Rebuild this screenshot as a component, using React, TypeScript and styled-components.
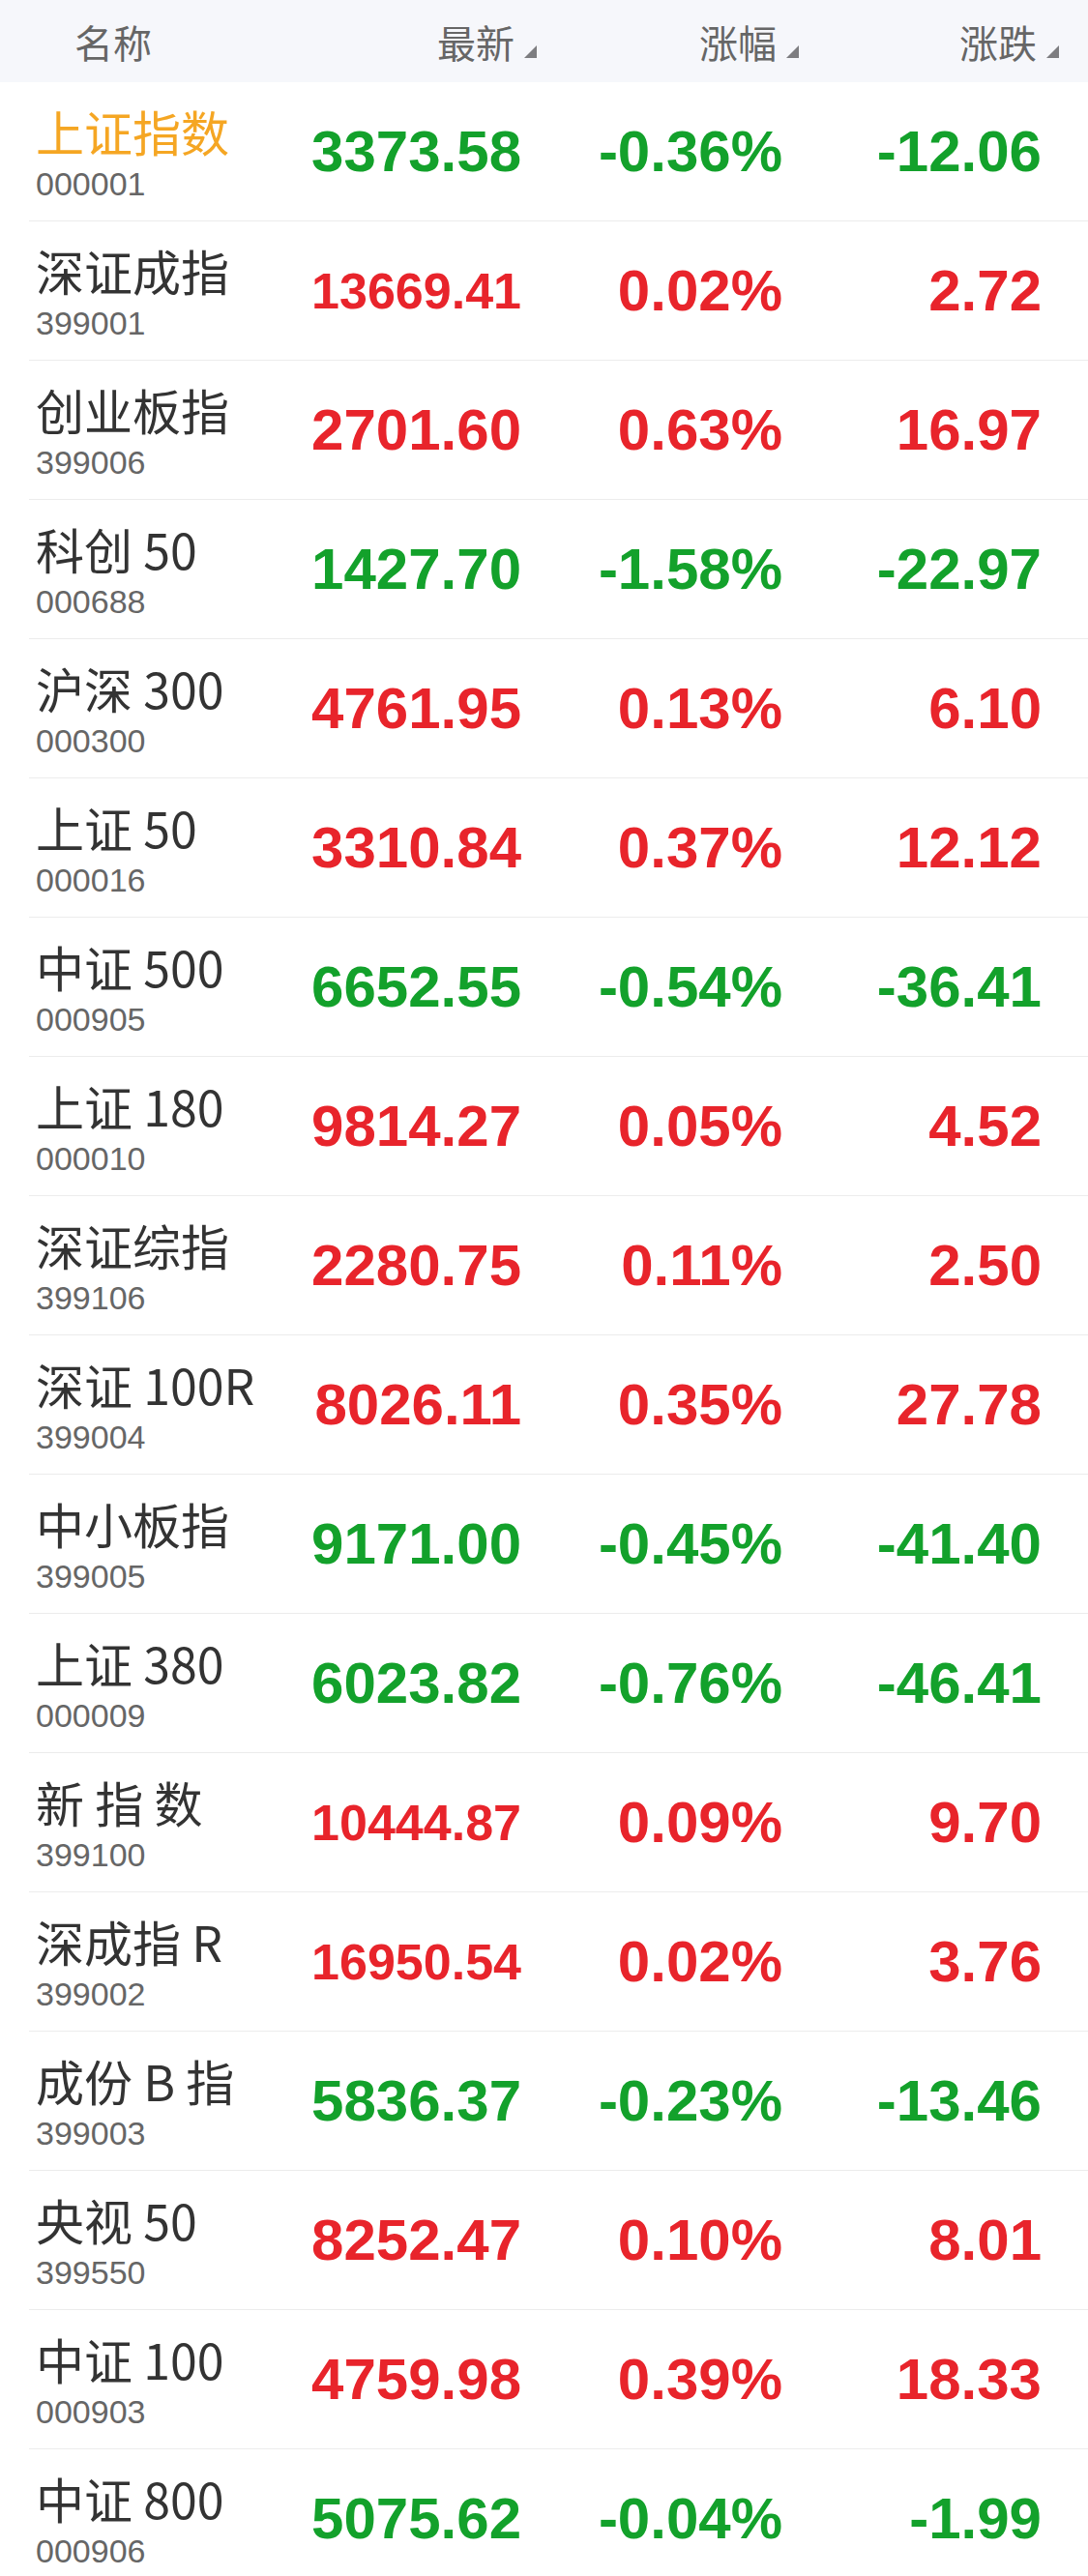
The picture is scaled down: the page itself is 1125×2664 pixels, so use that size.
import React from "react";
import styled, { createGlobalStyle } from "styled-components";

const GlobalStyle = createGlobalStyle`
  html, body {
    margin: 0;
    padding: 0;
    background: #ffffff;
  }
  body {
    font-family: "Noto Sans CJK SC", "Noto Sans", sans-serif;
    -webkit-font-smoothing: antialiased;
  }
`;

type Quote = {
  name: string;
  code: string;
  last: string;
  pct: string;
  chg: string;
  highlight?: boolean;
};

const quotes: Quote[] = [
  { name: "上证指数", code: "000001", last: "3373.58", pct: "-0.36%", chg: "-12.06", highlight: true },
  { name: "深证成指", code: "399001", last: "13669.41", pct: "0.02%", chg: "2.72" },
  { name: "创业板指", code: "399006", last: "2701.60", pct: "0.63%", chg: "16.97" },
  { name: "科创 50", code: "000688", last: "1427.70", pct: "-1.58%", chg: "-22.97" },
  { name: "沪深 300", code: "000300", last: "4761.95", pct: "0.13%", chg: "6.10" },
  { name: "上证 50", code: "000016", last: "3310.84", pct: "0.37%", chg: "12.12" },
  { name: "中证 500", code: "000905", last: "6652.55", pct: "-0.54%", chg: "-36.41" },
  { name: "上证 180", code: "000010", last: "9814.27", pct: "0.05%", chg: "4.52" },
  { name: "深证综指", code: "399106", last: "2280.75", pct: "0.11%", chg: "2.50" },
  { name: "深证 100R", code: "399004", last: "8026.11", pct: "0.35%", chg: "27.78" },
  { name: "中小板指", code: "399005", last: "9171.00", pct: "-0.45%", chg: "-41.40" },
  { name: "上证 380", code: "000009", last: "6023.82", pct: "-0.76%", chg: "-46.41" },
  { name: "新 指 数", code: "399100", last: "10444.87", pct: "0.09%", chg: "9.70" },
  { name: "深成指 R", code: "399002", last: "16950.54", pct: "0.02%", chg: "3.76" },
  { name: "成份 B 指", code: "399003", last: "5836.37", pct: "-0.23%", chg: "-13.46" },
  { name: "央视 50", code: "399550", last: "8252.47", pct: "0.10%", chg: "8.01" },
  { name: "中证 100", code: "000903", last: "4759.98", pct: "0.39%", chg: "18.33" },
  { name: "中证 800", code: "000906", last: "5075.62", pct: "-0.04%", chg: "-1.99" },
];

const Page = styled.div`
  width: 1125px;
  min-height: 2664px;
  background: #ffffff;
  overflow: hidden;
`;

const Header = styled.div`
  height: 85px;
  background: #f6f7fb;
  display: grid;
  grid-template-columns: 210px 268px 271px 269px;
  align-items: center;
  padding: 0 30px 0 77px;
`;

const HeadCell = styled.div<{ $align?: "left" | "right" }>`
  display: flex;
  justify-content: ${(p) => (p.$align === "left" ? "flex-start" : "flex-end")};
  align-items: flex-end;
  gap: 10px;
`;

const HeadLabel = styled.span`
  font-family: "Noto Sans CJK SC", sans-serif;
  font-size: 40px;
  line-height: 58px;
  color: #666666;
`;

const SortMark = styled.svg`
  width: 13px;
  height: 13px;
  flex: none;
  margin-bottom: 12px;
`;

const List = styled.div`
  margin-left: 30px;
`;

const Row = styled.div`
  height: 143px;
  border-bottom: 1px solid #ececec;
  display: grid;
  grid-template-columns: 280px 222px 270px 268px;
  align-items: center;
  padding: 0 48px 0 7px;
`;

const NameBlock = styled.div`
  display: flex;
  flex-direction: column;
  justify-content: center;
  padding-bottom: 5px;
`;

const Name = styled.div<{ $highlight?: boolean }>`
  font-family: "Noto Sans CJK SC", sans-serif;
  font-size: 50px;
  line-height: 72px;
  white-space: pre;
  color: ${(p) => (p.$highlight ? "#f5a623" : "#333333")};
`;

const Code = styled.div`
  font-family: "Liberation Sans", Arial, sans-serif;
  font-size: 34px;
  line-height: 38px;
  color: #666666;
`;

const Value = styled.div<{ $up: boolean; $compact?: boolean }>`
  text-align: right;
  font-family: "Liberation Sans", Arial, sans-serif;
  font-weight: 700;
  font-size: ${(p) => (p.$compact ? "52px" : "60px")};
  line-height: 68px;
  white-space: nowrap;
  color: ${(p) => (p.$up ? "#e8242b" : "#13a12b")};
`;

const Sort = () => (
  <SortMark viewBox="0 0 13 13">
    <polygon points="13,0 13,13 0,13" fill="#7d7d80" />
  </SortMark>
);

export default function App() {
  return (
    <Page>
      <GlobalStyle />
      <Header>
        <HeadCell $align="left">
          <HeadLabel>名称</HeadLabel>
        </HeadCell>
        <HeadCell>
          <HeadLabel>最新</HeadLabel>
          <Sort />
        </HeadCell>
        <HeadCell>
          <HeadLabel>涨幅</HeadLabel>
          <Sort />
        </HeadCell>
        <HeadCell>
          <HeadLabel>涨跌</HeadLabel>
          <Sort />
        </HeadCell>
      </Header>
      <List>
        {quotes.map((q) => {
          const up = !q.chg.startsWith("-");
          return (
            <Row key={q.code}>
              <NameBlock>
                <Name $highlight={q.highlight}>{q.name}</Name>
                <Code>{q.code}</Code>
              </NameBlock>
              <Value $up={up} $compact={q.last.length >= 8}>
                {q.last}
              </Value>
              <Value $up={up}>{q.pct}</Value>
              <Value $up={up}>{q.chg}</Value>
            </Row>
          );
        })}
      </List>
    </Page>
  );
}
